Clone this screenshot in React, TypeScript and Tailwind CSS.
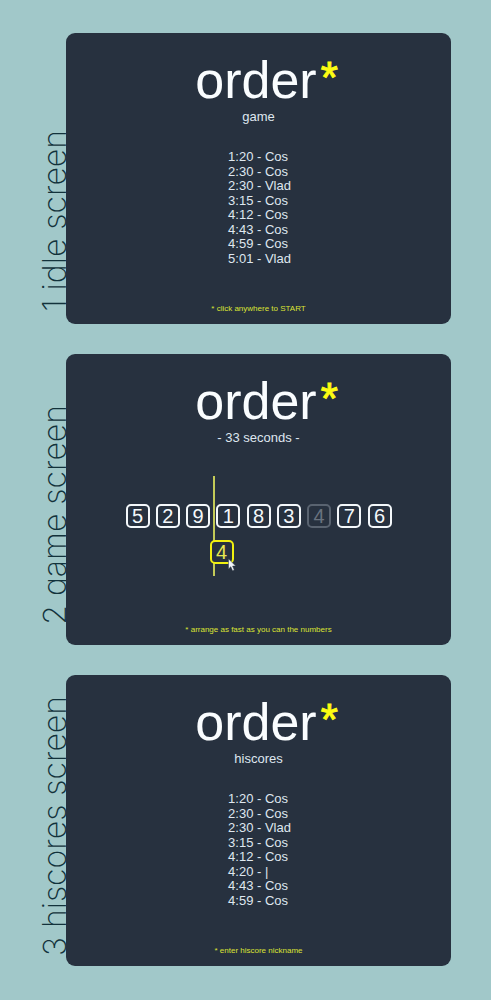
import type { ReactNode } from "react";

type ScreenProps = {
  label: string;
  labelInset: string;
  subtitle: string;
  hint: ReactNode;
  children: ReactNode;
};

function Screen({ label, labelInset, subtitle, hint, children }: ScreenProps) {
  return (
    <section className="flex">
      <div className={`flex w-[66px] shrink-0 items-end justify-end ${labelInset}`}>
        <h2 className="-mr-[9px] rotate-180 whitespace-nowrap font-['Inter',sans-serif] text-[32px] leading-10 font-extralight text-[#12323b] [writing-mode:vertical-rl]">
          {label}
        </h2>
      </div>
      <div className="relative flex min-h-[291px] min-w-0 flex-1 flex-col items-center rounded-[9px] bg-[#27313f]">
        <h1 className="mt-4 h-[62px] pl-4 text-[52px] leading-[62px] text-[#fafdff]">
          order
          <span className="ml-1 align-[5px] text-[44px] leading-none text-[#fdfc12] [-webkit-text-stroke:1px_#fdfc12]">
            *
          </span>
        </h1>
        <p className="-mt-[3px] text-[13px] leading-[18px]">{subtitle}</p>
        {children}
        <div className="mt-auto pb-[9px] text-[8px] leading-3 text-[#dbe334]">{hint}</div>
      </div>
    </section>
  );
}

type Score = { time: string; name?: string };

function Scores({ items }: { items: Score[] }) {
  return (
    <ol className="mt-6 grid h-[116px] auto-rows-fr pl-0.5 text-[13px] leading-[14px]">
      {items.map(({ time, name }) => (
        <li key={`${time}${name}`} className="flex whitespace-pre">
          {name ? (
            `${time} - ${name}`
          ) : (
            <label className="flex">
              {`${time} - `}
              <input
                aria-label="Nickname"
                defaultValue="|"
                className="h-[14px] w-5 bg-transparent p-0 leading-[14px] outline-none"
              />
            </label>
          )}
        </li>
      ))}
    </ol>
  );
}

const tile =
  "flex size-6 items-center justify-center rounded-[5px] border-2 text-[20px] leading-5";

function Board() {
  return (
    <div className="relative mt-[57px] flex w-[266px] justify-between">
      {[5, 2, 9, 1, 8, 3, 4, 7, 6].map((n) => (
        <button
          key={n}
          type="button"
          className={`${tile} ${n === 4 ? "border-[#596370] text-[#69727e]" : "border-[#f4f8fb] text-[#f4f8fb]"}`}
        >
          {n}
        </button>
      ))}
      <div className="absolute -top-7 left-[87px] h-[100px] w-0.5 bg-[#c3ca58]" />
      <button
        type="button"
        aria-label="Dragged 4"
        className={`${tile} absolute top-9 left-[84px] border-[#f0f010] bg-[#27313f] text-[#e6e850]`}
      >
        4
      </button>
      <svg
        aria-hidden="true"
        viewBox="0 0 9 14"
        className="absolute top-[54px] left-[102px] h-[14px] w-[9px]"
      >
        <path
          d="M.5.8v10.1l2.3-2.2 1.7 4 1.8-.8-1.7-3.8h3.1z"
          fill="#f2f5fa"
          stroke="#2b3441"
          strokeWidth=".5"
        />
      </svg>
    </div>
  );
}

export default function App() {
  return (
    <main className="flex min-h-screen flex-col gap-[30px] bg-[#a1c8c9] py-[33px] pr-10 font-['Liberation_Sans',Arial,sans-serif] text-[#dfe7ef]">
      <Screen
        label="1 idle screen"
        labelInset="pb-3"
        subtitle="game"
        hint={<button type="button" className="block">* click anywhere to START</button>}
      >
        <Scores
          items={[
            { time: "1:20", name: "Cos" },
            { time: "2:30", name: "Cos" },
            { time: "2:30", name: "Vlad" },
            { time: "3:15", name: "Cos" },
            { time: "4:12", name: "Cos" },
            { time: "4:43", name: "Cos" },
            { time: "4:59", name: "Cos" },
            { time: "5:01", name: "Vlad" },
          ]}
        />
      </Screen>
      <Screen
        label="2 game screen"
        labelInset="pb-5"
        subtitle="- 33 seconds -"
        hint="* arrange as fast as you can the numbers"
      >
        <Board />
      </Screen>
      <Screen
        label="3 hiscores screen"
        labelInset="pb-2.5"
        subtitle="hiscores"
        hint="* enter hiscore nickname"
      >
        <Scores
          items={[
            { time: "1:20", name: "Cos" },
            { time: "2:30", name: "Cos" },
            { time: "2:30", name: "Vlad" },
            { time: "3:15", name: "Cos" },
            { time: "4:12", name: "Cos" },
            { time: "4:20" },
            { time: "4:43", name: "Cos" },
            { time: "4:59", name: "Cos" },
          ]}
        />
      </Screen>
    </main>
  );
}
